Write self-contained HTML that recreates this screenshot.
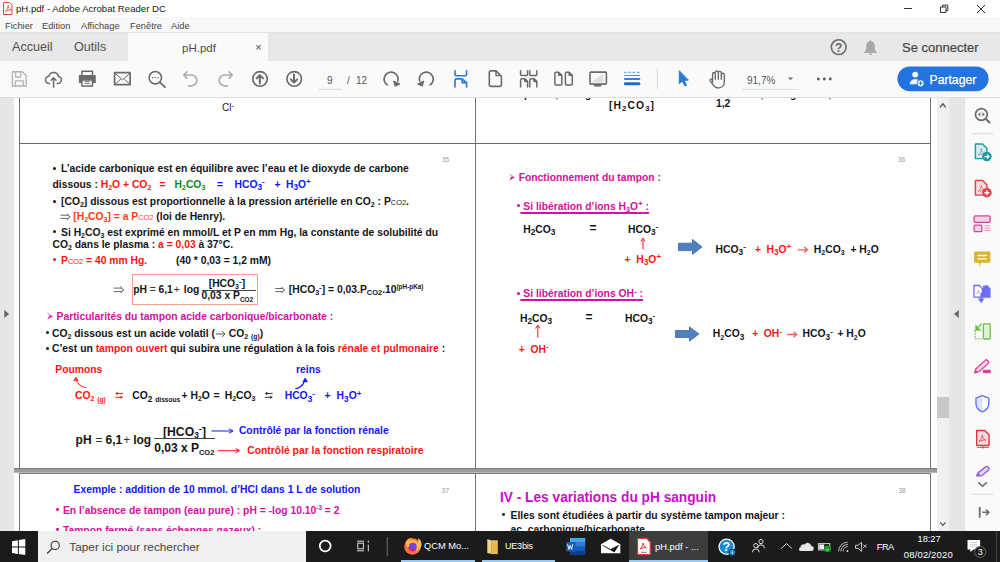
<!DOCTYPE html>
<html><head><meta charset="utf-8">
<style>
*{margin:0;padding:0;box-sizing:border-box}
html,body{width:1000px;height:562px;overflow:hidden;background:#fff;font-family:"Liberation Sans",sans-serif}
.a{position:absolute;white-space:nowrap}
#title{left:0;top:0;width:1000px;height:17px;background:#fff}
#menu{left:0;top:17px;width:1000px;height:16px;background:#f8f8f8;border-bottom:1px solid #e3e3e3}
#tabs{left:0;top:33px;width:1000px;height:28px;background:#e8e8e8}
#tb{left:0;top:61px;width:1000px;height:37px;background:#fafafa;border-bottom:1px solid #dcdcdc}
#doc{left:0;top:98px;width:963.6px;height:433px;background:#e6e6e6;overflow:hidden}
#side{left:963.6px;top:98px;width:36.4px;height:433px;background:#fafafa;border-left:1px solid #e2e2e2}
#task{left:0;top:531px;width:1000px;height:31px;background:#1b1b1b}
.t1{font-size:9.6px;color:#1a1a1a}
.m{font-size:9.3px;color:#444}

</style></head><body>
<div id="title" class="a">
  <svg class="a" style="left:0;top:0" width="20" height="17" viewBox="0 0 20 17">
    <path d="M3.5 2.5h6l2.5 2.5v9.5h-8.5z" fill="#fff" stroke="#e8423c" stroke-width="1"/>
    <path d="M5.2 11.5c1.5-1.2 2.6-3.5 2.9-6 .2 2.2 1.5 4 3.3 4.5-2-.2-4.3.4-6.2 1.5z" fill="none" stroke="#e8423c" stroke-width="0.8"/>
  </svg>
  <div class="a t1" style="left:16px;top:3.4px">pH.pdf - Adobe Acrobat Reader DC</div>
  <svg class="a" style="left:890px;top:0" width="110" height="17" viewBox="890 0 110 17">
    <path d="M904 8.5h8" stroke="#333" stroke-width="1"/>
    <path d="M940.5 7h5.5v5.5h-5.5z M942.5 7v-1.8h5.3v5.3h-1.8" fill="none" stroke="#333" stroke-width="1"/>
    <path d="M977 5l8 8M985 5l-8 8" stroke="#333" stroke-width="1"/>
  </svg>
</div>
<div id="menu" class="a">
  <div class="a m" style="left:5px;top:3.8px">Fichier</div>
  <div class="a m" style="left:42px;top:3.8px">Edition</div>
  <div class="a m" style="left:81px;top:3.8px">Affichage</div>
  <div class="a m" style="left:130px;top:3.8px">Fenêtre</div>
  <div class="a m" style="left:171px;top:3.8px">Aide</div>
</div>
<div id="tabs" class="a">
  <div class="a" style="left:12px;top:6.6px;font-size:12.6px;color:#505050">Accueil</div>
  <div class="a" style="left:74px;top:6.6px;font-size:12.6px;color:#505050">Outils</div>
  <div class="a" style="left:128px;top:0;width:140px;height:28px;background:#fafafa"></div>
  <div class="a" style="left:182px;top:8.5px;font-size:11.5px;color:#4a4a4a">pH.pdf</div>
  <div class="a" style="left:255.3px;top:8px;font-size:11px;color:#444">×</div>
  <svg class="a" style="left:820px;top:0" width="70" height="28" viewBox="820 33 70 28">
    <circle cx="838.7" cy="47.1" r="7.4" fill="none" stroke="#6a6a6a" stroke-width="1.6"/>
    <text x="838.7" y="51.6" font-size="12" font-weight="bold" text-anchor="middle" fill="#6a6a6a" font-family="Liberation Sans">?</text>
    <path d="M870.5 40.2c-.7 0-1 .5-1 1-2.3.6-3.3 2.5-3.3 5v3.5l-2 2.6v.8h12.6v-.8l-2-2.6v-3.5c0-2.5-1-4.4-3.3-5 0-.5-.3-1-1-1z M869 53.5h3v1.2h-3z" fill="#a8a8a8"/>
  </svg>
  <div class="a" style="left:902px;top:7px;font-size:13px;color:#444;-webkit-text-stroke:0.2px #444">Se connecter</div>
</div>
<div id="tb" class="a">
  <svg class="a" style="left:0;top:0" width="1000" height="36" viewBox="0 61 1000 36">
    <g fill="none" stroke-linecap="round" stroke-linejoin="round">
      <!-- save -->
      <path d="M12.4 71.8h9.8l4 4v10.2h-13.8z" stroke="#b4b4b4" stroke-width="1.4"/>
      <path d="M15.6 72v5h5v-5" stroke="#b4b4b4" stroke-width="1.3"/>
      <path d="M15.4 86v-5.2h7.8v5.2" stroke="#b4b4b4" stroke-width="1.3"/>
      <!-- upload cloud -->
      <path d="M49.4 83.5a3.6 3.6 0 0 1 -.6-7.2 5 5 0 0 1 9.7 .2 3.5 3.5 0 0 1 -1.3 7" stroke="#6a6a6a" stroke-width="1.5"/>
      <path d="M53.6 87.2v-9.2M51.2 80.2l2.4-2.4 2.4 2.4" stroke="#6a6a6a" stroke-width="1.5"/>
      <!-- print -->
      <path d="M81.9 75.6v-4.3h10.6v4.3" stroke="#6a6a6a" stroke-width="1.5"/>
      <path d="M79.5 75.6h15.6v6.8h-15.6z" fill="#6a6a6a" stroke="#6a6a6a" stroke-width="1.3"/>
      <path d="M81.9 79.9h10.6v6.2h-10.6z" fill="#fafafa" stroke="#6a6a6a" stroke-width="1.5"/>
      <path d="M85 81.6h4.3M85 83.4h4.3" stroke="#6a6a6a" stroke-width="0.9"/>
      <!-- mail -->
      <path d="M114.6 72.6h15.5v12h-15.5z" stroke="#6a6a6a" stroke-width="1.7"/>
      <path d="M115 73.2l7.5 6.6 7.5-6.6M115 84.2l5.5-4.8M130 84.2l-5.5-4.8" stroke="#6a6a6a" stroke-width="1"/>
      <!-- search -->
      <circle cx="155.3" cy="77.7" r="6.2" stroke="#6a6a6a" stroke-width="1.6"/>
      <path d="M160 82.3l5 4.8" stroke="#6a6a6a" stroke-width="1.8"/>
      <path d="M152.5 77.7h.3M155.2 77.7h.3M158 77.7h.3" stroke="#6a6a6a" stroke-width="1.3"/>
      <!-- undo -->
      <path d="M184.5 75h7a5.4 5.4 0 0 1 0 10.8h-2.8M186.8 72l-3 3 3 3.2" stroke="#adadad" stroke-width="1.7"/>
      <!-- redo -->
      <path d="M231.5 75h-7a5.4 5.4 0 0 0 0 10.8h2.8M229.2 72l3 3-3 3.2" stroke="#adadad" stroke-width="1.7"/>
      <!-- up / down -->
      <circle cx="260" cy="78.9" r="7.3" stroke="#6a6a6a" stroke-width="1.6"/>
      <path d="M259.8 83.4v-8.2M256.6 78.4l3.2-3.2 3.2 3.2" stroke="#6a6a6a" stroke-width="2"/>
      <circle cx="294.2" cy="78.9" r="7.3" stroke="#6a6a6a" stroke-width="1.6"/>
      <path d="M294 74.4v8.2M290.8 79.4l3.2 3.2 3.2-3.2" stroke="#6a6a6a" stroke-width="2"/>
      <!-- rotate cw -->
      <path d="M387.8 85.3a7 7 0 1 1 9.8-3.5" stroke="#6a6a6a" stroke-width="1.7" stroke-linecap="butt"/>
      <path d="M393.9 81.2l6 2.8-4.5 2.1z" fill="#6a6a6a" stroke="#6a6a6a" stroke-width="1"/>
      <!-- rotate ccw -->
      <path d="M429.6 85.3a7 7 0 1 0 -9.8-3.5" stroke="#6a6a6a" stroke-width="1.7" stroke-linecap="butt"/>
      <path d="M423.5 81.2l-6 2.8 4.5 2.1z" fill="#6a6a6a" stroke="#6a6a6a" stroke-width="1"/>
      <!-- scroll blue -->
      <path d="M455 70.8v3.6a1.3 1.3 0 0 0 1.3 1.3h9a1.3 1.3 0 0 0 1.3-1.3v-3.6" stroke="#2b78d4" stroke-width="1.6"/>
      <path d="M455 87v-6.8a1.3 1.3 0 0 1 1.3-1.3h5.8l4.5 3.6v4.5M462.1 79v3.6h4.4" stroke="#2b78d4" stroke-width="1.6"/>
      <!-- page -->
      <path d="M489.3 72.2a1.3 1.3 0 0 1 1.3-1.3h5.4l5.4 5.4v8.8a1.3 1.3 0 0 1 -1.3 1.3h-9.5a1.3 1.3 0 0 1 -1.3-1.3z" stroke="#6a6a6a" stroke-width="1.6"/>
      <path d="M496 71v4.6h5" stroke="#6a6a6a" stroke-width="1.4"/>
      <!-- grid -->
      <path d="M520.6 70.8v3.6a1.2 1.2 0 0 0 1.2 1.2h4.6a1.2 1.2 0 0 0 1.2-1.2v-3.6M529.8 70.8v3.6a1.2 1.2 0 0 0 1.2 1.2h4.6a1.2 1.2 0 0 0 1.2-1.2v-3.6" stroke="#6a6a6a" stroke-width="1.5"/>
      <path d="M520.6 87v-7a1.2 1.2 0 0 1 1.2-1.2h3.2l2.6 2.6v5.6M524.8 79v2.6h2.8M529.8 87v-7a1.2 1.2 0 0 1 1.2-1.2h3.2l2.6 2.6v5.6M534 79v2.6h2.8" stroke="#6a6a6a" stroke-width="1.5"/>
      <!-- two pages -->
      <path d="M554.9 73.2a1 1 0 0 1 1-1h2.8l3.1 3.1v8.6a1 1 0 0 1 -1 1h-4.9a1 1 0 0 1 -1-1z M558.7 72.3v3h3M565.4 73.2a1 1 0 0 1 1-1h2.8l3.1 3.1v8.6a1 1 0 0 1 -1 1h-4.9a1 1 0 0 1 -1-1z M569.2 72.3v3h3" stroke="#6a6a6a" stroke-width="1.5"/>
      <!-- screen -->
      <path d="M603.5 73.4v9.2h-12.6z" fill="#dedede" stroke="none"/>
      <path d="M590 73a.9.9 0 0 1 .9-.9h14.6a.9.9 0 0 1 .9.9v10.2a.9.9 0 0 1 -.9.9h-14.6a.9.9 0 0 1 -.9-.9z" stroke="#6a6a6a" stroke-width="1.6"/>
      <path d="M594.2 85.5h7" stroke="#6a6a6a" stroke-width="2.2" stroke-linecap="butt"/>
      <!-- lines -->
      <path d="M624.5 72.3h1.6M628.8 72.3h1.6M633 72.3h1.6M637.3 72.3h1.8" stroke="#4a8ddc" stroke-width="1"/>
      <path d="M624.5 75.5h15" stroke="#4a8ddc" stroke-width="1"/>
      <path d="M624.8 79h14.6" stroke="#3681d8" stroke-width="1.8"/>
      <path d="M625.3 83.8h13.6" stroke="#1c6cc8" stroke-width="3"/>
      <!-- separator -->
      <path d="M657.3 68v21" stroke="#dcdcdc" stroke-width="1" stroke-linecap="butt"/>
      <!-- pointer -->
      <path d="M679.3 71.1v12.6l3-2.7 2.7 5.1 1.5-.9-2.4-4.8 3.9-.3z" fill="#2b78d4" stroke="#2b78d4" stroke-width="1"/>
      <!-- hand -->
      <path d="M712.6 82.2V73.8a1.35 1.35 0 0 1 2.7 0V79.2V72.3a1.5 1.5 0 0 1 3 0V79.2V72.9a1.5 1.5 0 0 1 3 0V79.2V74.7a1.5 1.5 0 0 1 3 0V82.2c0 3.4-2.6 5.8-6 5.8-2.2 0-3.6-.9-4.8-2.6l-3.4-4.6a1.3 1.3 0 0 1 2-1.6z" stroke="#6a6a6a" stroke-width="1.35"/>
      <!-- zoom dropdown -->
      <path d="M788 77.5h5l-2.5 2.8z" fill="#6a6a6a" stroke="none"/>
      <path d="M742 89.4h57" stroke="#e0e0e0" stroke-width="1" stroke-linecap="butt"/>
      <path d="M319 89.2h23" stroke="#dadada" stroke-width="1" stroke-linecap="butt"/>
      <!-- more -->
      <circle cx="818.3" cy="79" r="1.4" fill="#555" stroke="none"/>
      <circle cx="824.3" cy="79" r="1.4" fill="#555" stroke="none"/>
      <circle cx="830.3" cy="79" r="1.4" fill="#555" stroke="none"/>
    </g>
    <!-- partager -->
    <rect x="897.4" y="66.5" width="91.2" height="24.7" rx="12.35" fill="#2374e1"/>
    <circle cx="915.2" cy="74.6" r="2.9" fill="#fff"/>
    <path d="M909.8 84.3c0-3 2.2-5 5.4-5s5.4 2 5.4 5z" fill="#fff"/>
    <circle cx="920.6" cy="83.3" r="3.6" fill="#fff" stroke="#2374e1" stroke-width="1"/>
    <path d="M918.6 83.3h4M920.6 81.3v4" stroke="#2374e1" stroke-width="1.1"/>
  </svg>
  <div class="a" style="left:327px;top:14px;font-size:10px;color:#555">9</div>
  <div class="a" style="left:347px;top:14px;font-size:10px;color:#555">/</div>
  <div class="a" style="left:356px;top:14px;font-size:10px;color:#555">12</div>
  <div class="a" style="left:747px;top:14px;font-size:10px;color:#555">91,7%</div>
  <div class="a" style="left:929.5px;top:11.6px;font-size:12.2px;color:#fff;-webkit-text-stroke:0.25px #fff">Partager</div>
</div>

<div id="doc" class="a">
<div class="a" style="left:14px;top:0;width:935px;height:434px;background:#fff"></div>
<div class="a" style="left:19px;top:0;width:1px;height:370px;background:#737373"></div>
<div class="a" style="left:19px;top:375px;width:1px;height:100px;background:#737373"></div>
<div class="a" style="left:475px;top:0;width:1px;height:370px;background:#737373"></div>
<div class="a" style="left:475px;top:375px;width:1px;height:100px;background:#737373"></div>
<div class="a" style="left:930px;top:0;width:1px;height:370px;background:#737373"></div>
<div class="a" style="left:930px;top:375px;width:1px;height:100px;background:#737373"></div>
<div class="a" style="left:19px;top:45px;width:912px;height:1px;background:#6a6a6a"></div>
<div class="a" style="left:14px;top:370px;width:923px;height:1px;background:#7a7a7a"></div>
<div class="a" style="left:14px;top:371px;width:923px;height:3px;background:#9c9c9c"></div>
<div class="a" style="left:14px;top:374px;width:923px;height:1px;background:#b8b8b8"></div>
<div class="a" style="left:19px;top:375px;width:912px;height:1px;background:#7a7a7a"></div>
<div class="a" style="left:222.0px;top:4.53px;font-size:10px;line-height:10px;color:#222;font-weight:normal;">Cl<span style="font-size:78%;position:relative;top:-3px">-</span></div>
<div class="a" style="left:609.0px;top:2.78px;font-size:10.3px;line-height:10.3px;color:#141418;font-weight:bold;letter-spacing:1.1px">[H<span style="font-size:75%;position:relative;top:2px">2</span>CO<span style="font-size:75%;position:relative;top:2px">3</span>]</div>
<div class="a" style="left:716.0px;top:0.78px;font-size:10.3px;line-height:10.3px;color:#141418;font-weight:bold;">1,2</div>
<div class="a" style="left:524.0px;top:-7.82px;font-size:10.3px;line-height:10.3px;color:#141418;font-weight:bold;">pH = 6,1 + log</div>
<div class="a" style="left:746.0px;top:-7.82px;font-size:10.3px;line-height:10.3px;color:#141418;font-weight:bold;">= 6,1 + log 20 = 7,4</div>
<div class="a" style="left:442.0px;top:59.00px;font-size:6.5px;line-height:6.5px;color:#999;font-weight:normal;">35</div>
<div class="a" style="left:52.6px;top:68.6px;width:3px;height:3px;border-radius:50%;background:#141418"></div>
<div class="a" style="left:61.0px;top:66.26px;font-size:10.33px;line-height:10.33px;color:#141418;font-weight:bold;">L’acide carbonique est en équilibre avec l’eau et le dioxyde de carbone</div>
<div class="a" style="left:52.5px;top:81.66px;font-size:10.33px;line-height:10.33px;color:#141418;font-weight:bold;">dissous : <span style="color:#ff1414">H<span style="font-size:68%;position:relative;top:2.2px">2</span>O + CO<span style="font-size:68%;position:relative;top:2.2px">2</span></span></div>
<div class="a" style="left:159.6px;top:81.66px;font-size:10.33px;line-height:10.33px;color:#ff1414;font-weight:bold;">=</div>
<div class="a" style="left:174.5px;top:81.66px;font-size:10.33px;line-height:10.33px;color:#0f8a0f;font-weight:bold;">H<span style="font-size:68%;position:relative;top:2.2px">2</span>CO<span style="font-size:68%;position:relative;top:2.2px">3</span></div>
<div class="a" style="left:217.0px;top:81.66px;font-size:10.33px;line-height:10.33px;color:#1414ff;font-weight:bold;">=</div>
<div class="a" style="left:234.5px;top:81.66px;font-size:10.33px;line-height:10.33px;color:#1414ff;font-weight:bold;">HCO<span style="font-size:80%;position:relative;top:2.6px">3</span><span style="font-size:78%;position:relative;top:-3.4px">-</span></div>
<div class="a" style="left:274.5px;top:81.66px;font-size:10.33px;line-height:10.33px;color:#1414ff;font-weight:bold;">+</div>
<div class="a" style="left:286.0px;top:81.66px;font-size:10.33px;line-height:10.33px;color:#1414ff;font-weight:bold;">H<span style="font-size:80%;position:relative;top:2.6px">3</span>O<span style="font-size:78%;position:relative;top:-3.4px">+</span></div>
<div class="a" style="left:52.6px;top:101.6px;width:3px;height:3px;border-radius:50%;background:#141418"></div>
<div class="a" style="left:61.0px;top:98.86px;font-size:10.33px;line-height:10.33px;color:#141418;font-weight:bold;">[CO<span style="font-size:68%;position:relative;top:2.2px">2</span>] dissous est proportionnelle à la pression artérielle en CO<span style="font-size:68%;position:relative;top:2.2px">2</span> : P<span style="font-weight:normal;font-size:72%">CO2</span>.</div>
<div class="a" style="left:73.3px;top:113.56px;font-size:10.33px;line-height:10.33px;color:#141418;font-weight:bold;"><span style="color:#ff3a1a">[H<span style="font-size:68%;position:relative;top:2.2px">2</span>CO<span style="font-size:68%;position:relative;top:2.2px">3</span>] = a P<span style="font-weight:normal;font-size:72%">CO2</span></span> (loi de Henry).</div>
<div class="a" style="left:52.6px;top:132.0px;width:3px;height:3px;border-radius:50%;background:#141418"></div>
<div class="a" style="left:61.0px;top:129.66px;font-size:10.33px;line-height:10.33px;color:#141418;font-weight:bold;">Si H<span style="font-size:68%;position:relative;top:2.2px">2</span>CO<span style="font-size:68%;position:relative;top:2.2px">3</span> est exprimé en mmol/L et P en mm Hg, la constante de solubilité du</div>
<div class="a" style="left:52.5px;top:141.76px;font-size:10.33px;line-height:10.33px;color:#141418;font-weight:bold;">CO<span style="font-size:68%;position:relative;top:2.2px">2</span> dans le plasma : <span style="color:#ff1414">a = 0,03</span> à 37°C.</div>
<div class="a" style="left:52.6px;top:160.4px;width:3px;height:3px;border-radius:50%;background:#ff1414"></div>
<div class="a" style="left:61.0px;top:157.96px;font-size:10.33px;line-height:10.33px;color:#ff1414;font-weight:bold;">P<span style="font-weight:normal;font-size:72%">CO2</span> = 40 mm Hg.</div>
<div class="a" style="left:176.0px;top:157.96px;font-size:10.33px;line-height:10.33px;color:#141418;font-weight:bold;">(40 * 0,03 = 1,2 mM)</div>
<div class="a" style="left:131.5px;top:175.5px;width:126px;height:31.5px;border:1px solid #f4a090"></div>
<div class="a" style="left:133.2px;top:186.76px;font-size:10.33px;line-height:10.33px;color:#141418;font-weight:bold;">pH</div>
<div class="a" style="left:149.8px;top:186.76px;font-size:10.33px;line-height:10.33px;color:#333;font-weight:normal;">=</div>
<div class="a" style="left:158.5px;top:186.76px;font-size:10.33px;line-height:10.33px;color:#141418;font-weight:bold;">6,1</div>
<div class="a" style="left:173.8px;top:186.76px;font-size:10.33px;line-height:10.33px;color:#333;font-weight:normal;">+</div>
<div class="a" style="left:183.8px;top:186.76px;font-size:10.33px;line-height:10.33px;color:#141418;font-weight:bold;">log</div>
<div class="a" style="left:208.7px;top:181.06px;font-size:10.33px;line-height:10.33px;color:#141418;font-weight:bold;">[HCO<span style="font-size:68%;position:relative;top:2px">3</span><span style="font-size:78%;position:relative;top:-3px">-</span>]</div>
<div class="a" style="left:201.5px;top:191.60000000000002px;width:54px;height:1px;background:#444"></div>
<div class="a" style="left:201.5px;top:193.46px;font-size:10.33px;line-height:10.33px;color:#141418;font-weight:bold;">0,03 x P<span style="font-size:62%;position:relative;top:2.5px">CO2</span></div>
<div class="a" style="left:288.8px;top:187.26px;font-size:10.33px;line-height:10.33px;color:#141418;font-weight:bold;">[HCO<span style="font-size:68%;position:relative;top:2.2px">3</span><span style="font-size:78%;position:relative;top:-3.4px">-</span>] = 0,03.P<span style="font-size:72%;position:relative;top:1.5px">CO2</span>.10<span style="font-size:62%;position:relative;top:-4px">(pH-pKa)</span></div>
<svg class="a" style="left:45.8px;top:214.0px" width="9" height="8" viewBox="45.8 312 9 8"><path d="M46.8 312.6L53.0 316L49.0 316z" fill="#d4109c" opacity=".45"/><path d="M47.0 319.4L53.0 316L49.0 316z" fill="#d4109c"/></svg>
<div class="a" style="left:56.5px;top:214.06px;font-size:10.33px;line-height:10.33px;color:#d4109c;font-weight:bold;">Particularités du tampon acide carbonique/bicarbonate :</div>
<div class="a" style="left:45.9px;top:233.4px;width:3.1px;height:3.1px;border-radius:50%;background:#141418"></div>
<div class="a" style="left:52.0px;top:230.56px;font-size:10.33px;line-height:10.33px;color:#141418;font-weight:bold;">CO<span style="font-size:68%;position:relative;top:2.2px">2</span> dissous est un acide volatil (</div>
<div class="a" style="left:228.8px;top:230.56px;font-size:10.33px;line-height:10.33px;color:#141418;font-weight:bold;">CO<span style="font-size:68%;position:relative;top:2.2px">2</span> <span style="font-size:65%;position:relative;top:2.5px">(g)</span>)</div>
<div class="a" style="left:45.9px;top:248.7px;width:3.1px;height:3.1px;border-radius:50%;background:#141418"></div>
<div class="a" style="left:52.0px;top:245.96px;font-size:10.33px;line-height:10.33px;color:#141418;font-weight:bold;">C’est un <span style="color:#ff1414">tampon ouvert</span> qui subira une régulation à la fois <span style="color:#ff1414">rénale et pulmonaire</span> :</div>
<div class="a" style="left:55.3px;top:266.86px;font-size:10.33px;line-height:10.33px;color:#ff1414;font-weight:bold;">Poumons</div>
<div class="a" style="left:296.0px;top:267.26px;font-size:10.33px;line-height:10.33px;color:#1414ff;font-weight:bold;">reins</div>
<div class="a" style="left:75.0px;top:293.26px;font-size:10.33px;line-height:10.33px;color:#ff1414;font-weight:bold;">CO<span style="font-size:68%;position:relative;top:2.2px">2</span> <span style="font-size:65%;position:relative;top:2.5px">(g)</span></div>
<div class="a" style="left:132.3px;top:293.26px;font-size:10.33px;line-height:10.33px;color:#141418;font-weight:bold;">CO<span style="font-size:80%;position:relative;top:2.5px">2</span> <span style="font-size:64%;position:relative;top:2.8px">dissous</span></div>
<div class="a" style="left:181.5px;top:293.26px;font-size:10.33px;line-height:10.33px;color:#141418;font-weight:bold;">+ H<span style="font-size:68%;position:relative;top:2.2px">2</span>O</div>
<div class="a" style="left:213.5px;top:293.26px;font-size:10.33px;line-height:10.33px;color:#141418;font-weight:bold;">=</div>
<div class="a" style="left:224.7px;top:293.26px;font-size:10.33px;line-height:10.33px;color:#141418;font-weight:bold;">H<span style="font-size:68%;position:relative;top:2.2px">2</span>CO<span style="font-size:68%;position:relative;top:2.2px">3</span></div>
<div class="a" style="left:284.7px;top:293.26px;font-size:10.33px;line-height:10.33px;color:#1414ff;font-weight:bold;">HCO<span style="font-size:80%;position:relative;top:2.6px">3</span><span style="font-size:78%;position:relative;top:-3.4px">-</span></div>
<div class="a" style="left:324.6px;top:293.26px;font-size:10.33px;line-height:10.33px;color:#1414ff;font-weight:bold;">+</div>
<div class="a" style="left:336.6px;top:293.26px;font-size:10.33px;line-height:10.33px;color:#1414ff;font-weight:bold;">H<span style="font-size:80%;position:relative;top:2.6px">3</span>O<span style="font-size:78%;position:relative;top:-3.4px">+</span></div>
<svg class="a" style="left:0;top:0" width="963" height="434" viewBox="0 98 963 434">
<path d="M86.2 387.8Q77.6 386.4 75.9 378" fill="none" stroke="#ff3030" stroke-width="1.15"/>
<path d="M73.6 381l2.2-4 2.6 3.4z" fill="#ff3030" stroke="#ff3030" stroke-width="0.6" stroke-linejoin="round"/>
<path d="M295.3 388.8Q302.8 387.6 305 379.5" fill="none" stroke="#1414ff" stroke-width="1.15"/>
<path d="M302.8 381.8l2.4-3.9 2.3 4z" fill="#1414ff" stroke="#1414ff" stroke-width="0.6" stroke-linejoin="round"/>
<path d="M211.5 431h21" stroke="#1414ff" stroke-width="1"/>
<path d="M229 428.8l4 2.2-4 2.2" fill="none" stroke="#1414ff" stroke-width="1"/>
<path d="M218 450.7h21" stroke="#ff1414" stroke-width="1"/>
<path d="M235.5 448.5l4 2.2-4 2.2" fill="none" stroke="#ff1414" stroke-width="1"/>
</svg>
<div class="a" style="left:75.6px;top:335.84px;font-size:12px;line-height:12px;color:#141418;font-weight:bold;">pH</div>
<div class="a" style="left:95.6px;top:335.84px;font-size:12px;line-height:12px;color:#333;font-weight:normal;">=</div>
<div class="a" style="left:105.6px;top:335.84px;font-size:12px;line-height:12px;color:#141418;font-weight:bold;">6,1</div>
<div class="a" style="left:123.2px;top:335.84px;font-size:12px;line-height:12px;color:#333;font-weight:normal;">+</div>
<div class="a" style="left:133.2px;top:335.84px;font-size:12px;line-height:12px;color:#141418;font-weight:bold;">log</div>
<div class="a" style="left:163.0px;top:327.67px;font-size:12.2px;line-height:12.2px;color:#141418;font-weight:bold;">[HCO<span style="font-size:68%;position:relative;top:2.5px">3</span><span style="font-size:78%;position:relative;top:-4px">-</span>]</div>
<div class="a" style="left:154.3px;top:340px;width:60.5px;height:1.2px;background:#444"></div>
<div class="a" style="left:154.3px;top:343.54px;font-size:12px;line-height:12px;color:#141418;font-weight:bold;">0,03 x P<span style="font-size:62%;position:relative;top:3px">CO2</span></div>
<div class="a" style="left:238.9px;top:328.26px;font-size:10.33px;line-height:10.33px;color:#1414ff;font-weight:bold;">Contrôlé par la fonction rénale</div>
<div class="a" style="left:247.3px;top:347.66px;font-size:10.33px;line-height:10.33px;color:#ff1414;font-weight:bold;">Contrôlé par la fonction respiratoire</div>
<div class="a" style="left:898.0px;top:59.00px;font-size:6.5px;line-height:6.5px;color:#999;font-weight:normal;">36</div>
<svg class="a" style="left:507.8px;top:75.4px" width="9" height="8" viewBox="507.8 173.4 9 8"><path d="M508.8 174.0L515.0 177.4L511.0 177.4z" fill="#d4109c" opacity=".45"/><path d="M509.0 180.8L515.0 177.4L511.0 177.4z" fill="#d4109c"/></svg>
<div class="a" style="left:518.7px;top:74.96px;font-size:10.33px;line-height:10.33px;color:#d4109c;font-weight:bold;">Fonctionnement du tampon :</div>
<div class="a" style="left:516.9px;top:106.2px;width:3px;height:3px;border-radius:50%;background:#d4109c"></div>
<div class="a" style="left:520.4px;top:103.66px;font-size:10.33px;line-height:10.33px;color:#d4109c;font-weight:bold;"><u style="text-decoration-thickness:1.5px;text-underline-offset:1.7px">&nbsp;Si libération d’ions H<span style="font-size:68%;position:relative;top:2.2px">3</span>O<span style="font-size:78%;position:relative;top:-3.4px">+</span> :</u></div>
<div class="a" style="left:523.3px;top:126.66px;font-size:10.33px;line-height:10.33px;color:#141418;font-weight:bold;">H<span style="font-size:80%;position:relative;top:2.5px">2</span>CO<span style="font-size:80%;position:relative;top:2.5px">3</span></div>
<div class="a" style="left:589.5px;top:124.34px;font-size:12px;line-height:12px;color:#141418;font-weight:bold;">=</div>
<div class="a" style="left:628.0px;top:126.66px;font-size:10.33px;line-height:10.33px;color:#141418;font-weight:bold;">HCO<span style="font-size:80%;position:relative;top:2.5px">3</span><span style="font-size:78%;position:relative;top:-3.4px">-</span></div>
<div class="a" style="left:624.5px;top:156.56px;font-size:10.33px;line-height:10.33px;color:#ff1414;font-weight:bold;">+ &nbsp;H<span style="font-size:80%;position:relative;top:2.5px">3</span>O<span style="font-size:78%;position:relative;top:-3.4px">+</span></div>
<div class="a" style="left:715.6px;top:146.76px;font-size:10.33px;line-height:10.33px;color:#141418;font-weight:bold;">HCO<span style="font-size:80%;position:relative;top:2.5px">3</span><span style="font-size:78%;position:relative;top:-3.4px">-</span></div>
<div class="a" style="left:755.0px;top:146.76px;font-size:10.33px;line-height:10.33px;color:#ff1414;font-weight:bold;">+</div>
<div class="a" style="left:766.5px;top:146.76px;font-size:10.33px;line-height:10.33px;color:#ff1414;font-weight:bold;">H<span style="font-size:80%;position:relative;top:2.5px">3</span>O<span style="font-size:78%;position:relative;top:-3.4px">+</span></div>
<div class="a" style="left:813.8px;top:146.76px;font-size:10.33px;line-height:10.33px;color:#141418;font-weight:bold;">H<span style="font-size:68%;position:relative;top:2.2px">2</span>CO<span style="font-size:68%;position:relative;top:2.2px">3</span></div>
<div class="a" style="left:850.4px;top:146.76px;font-size:10.33px;line-height:10.33px;color:#141418;font-weight:bold;">+ H<span style="font-size:68%;position:relative;top:2.2px">2</span>O</div>
<div class="a" style="left:516.9px;top:194.0px;width:3px;height:3px;border-radius:50%;background:#d4109c"></div>
<div class="a" style="left:520.4px;top:191.46px;font-size:10.33px;line-height:10.33px;color:#d4109c;font-weight:bold;"><u style="text-decoration-thickness:1.5px;text-underline-offset:1.7px">&nbsp;Si libération d’ions OH<span style="font-size:78%;position:relative;top:-3.4px">-</span> :</u></div>
<div class="a" style="left:520.0px;top:215.66px;font-size:10.33px;line-height:10.33px;color:#141418;font-weight:bold;">H<span style="font-size:80%;position:relative;top:2.5px">2</span>CO<span style="font-size:80%;position:relative;top:2.5px">3</span></div>
<div class="a" style="left:585.5px;top:213.34px;font-size:12px;line-height:12px;color:#141418;font-weight:bold;">=</div>
<div class="a" style="left:625.0px;top:215.66px;font-size:10.33px;line-height:10.33px;color:#141418;font-weight:bold;">HCO<span style="font-size:80%;position:relative;top:2.5px">3</span><span style="font-size:78%;position:relative;top:-3.4px">-</span></div>
<div class="a" style="left:518.7px;top:246.66px;font-size:10.33px;line-height:10.33px;color:#ff1414;font-weight:bold;">+ &nbsp;OH<span style="font-size:78%;position:relative;top:-3.4px">-</span></div>
<div class="a" style="left:712.8px;top:231.46px;font-size:10.33px;line-height:10.33px;color:#141418;font-weight:bold;">H<span style="font-size:68%;position:relative;top:2.2px">2</span>CO<span style="font-size:80%;position:relative;top:2.5px">3</span></div>
<div class="a" style="left:752.2px;top:231.46px;font-size:10.33px;line-height:10.33px;color:#ff1414;font-weight:bold;">+</div>
<div class="a" style="left:763.7px;top:231.46px;font-size:10.33px;line-height:10.33px;color:#ff1414;font-weight:bold;">OH<span style="font-size:78%;position:relative;top:-3.4px">-</span></div>
<div class="a" style="left:802.6px;top:231.46px;font-size:10.33px;line-height:10.33px;color:#141418;font-weight:bold;">HCO<span style="font-size:80%;position:relative;top:2.5px">3</span><span style="font-size:78%;position:relative;top:-3.4px">-</span></div>
<div class="a" style="left:837.4px;top:231.46px;font-size:10.33px;line-height:10.33px;color:#141418;font-weight:bold;">+ H<span style="font-size:68%;position:relative;top:2.2px">2</span>O</div>
<svg class="a" style="left:0;top:0" width="963" height="434" viewBox="0 98 963 434">
<path d="M643 249.5v-10" stroke="#ff1414" stroke-width="1"/>
<path d="M640.8 241.5l2.2-3.5 2.2 3.5" fill="none" stroke="#ff1414" stroke-width="1"/>
<path d="M537.8 337.5v-11" stroke="#ff1414" stroke-width="1"/>
<path d="M535.6 328.5l2.2-3.5 2.2 3.5" fill="none" stroke="#ff1414" stroke-width="1"/>
<path d="M678.5 243.2h14v-3.8l9.5 7.5-9.5 7.5v-3.8h-14z" fill="#4f81bd" stroke="#3a679c" stroke-width="0.8"/>
<path d="M675.5 330.5h14v-3.6l9.5 7.1-9.5 7.1v-3.6h-14z" fill="#4f81bd" stroke="#3a679c" stroke-width="0.8"/>
</svg>
<div class="a" style="left:441.8px;top:389.50px;font-size:6.5px;line-height:6.5px;color:#999;font-weight:normal;">37</div>
<div class="a" style="left:73.6px;top:386.96px;font-size:10.33px;line-height:10.33px;color:#1414ff;font-weight:bold;">Exemple : addition de 10 mmol. d’HCl dans 1 L de solution</div>
<div class="a" style="left:55.9px;top:410.2px;width:2.9px;height:2.9px;border-radius:50%;background:#d4109c"></div>
<div class="a" style="left:62.9px;top:407.76px;font-size:10.33px;line-height:10.33px;color:#d4109c;font-weight:bold;">En l’absence de tampon (eau pure) : pH = -log 10.10<span style="font-size:62%;position:relative;top:-3.5px">-3</span> = 2</div>
<div class="a" style="left:55.9px;top:430.2px;width:2.9px;height:2.9px;border-radius:50%;background:#d4109c"></div>
<div class="a" style="left:62.9px;top:427.86px;font-size:10.33px;line-height:10.33px;color:#d4109c;font-weight:bold;">Tampon fermé (sans échanges gazeux) :</div>
<div class="a" style="left:898.5px;top:389.50px;font-size:6.5px;line-height:6.5px;color:#999;font-weight:normal;">38</div>
<div class="a" style="left:500.3px;top:391.80px;font-size:14.3px;line-height:14.3px;color:#cc0acc;font-weight:bold;transform:scaleX(0.958);transform-origin:0 0">IV - Les variations du pH sanguin</div>
<div class="a" style="left:502.4px;top:415.4px;width:2.8px;height:2.8px;border-radius:50%;background:#141418"></div>
<div class="a" style="left:510.6px;top:412.66px;font-size:10.33px;line-height:10.33px;color:#141418;font-weight:bold;">Elles sont étudiées à partir du système tampon majeur :</div>
<div class="a" style="left:510.6px;top:426.76px;font-size:10.33px;line-height:10.33px;color:#141418;font-weight:bold;">ac. carbonique/bicarbonate</div>
<div class="a" style="left:936.6px;top:0;width:12.6px;height:434px;background:#f0f0f0"></div>
<div class="a" style="left:949.2px;top:0;width:14.4px;height:434px;background:#e6e6e6"></div>
<div class="a" style="left:936.6px;top:298.8px;width:12.6px;height:21.7px;background:#c8c8c8"></div>
<svg class="a" style="left:0;top:0" width="963" height="434" viewBox="0 98 963 434">
<path d="M940.1 107.3l2.8-3.5 2.8 3.5" fill="none" stroke="#555" stroke-width="1.4"/>
<path d="M940.3 522.4l2.6 3 2.6-3" fill="none" stroke="#555" stroke-width="1.2"/>
<path d="M958.8 309.9v8l-4.8-4z" fill="#666"/>
<path d="M4.3 309.9v8l4.8-4z" fill="#666"/>
</svg>
<svg class="a" style="left:0;top:0" width="963" height="434" viewBox="0 98 963 434">
<path d="M60.5 215.2h7.599999999999997M60.5 218.4h7.599999999999997M67.1 213.6q1.6 3.2000000000000086 3.2 3.2000000000000086q-1.6 0 -3.2 3.2000000000000086" fill="none" stroke="#555" stroke-width="0.9"/>
<path d="M113.8 288.1h8.000000000000004M113.8 291.6h8.000000000000004M120.8 286.5q1.6 3.35 3.2 3.35q-1.6 0 -3.2 3.35" fill="none" stroke="#555" stroke-width="0.9"/>
<path d="M275.3 288.5h7.4999999999999885M275.3 291.6h7.4999999999999885M281.8 286.9q1.6 3.1500000000000115 3.2 3.1500000000000115q-1.6 0 -3.2 3.1500000000000115" fill="none" stroke="#555" stroke-width="0.9"/>
<path d="M215.8 334H224.4M222.2 331.1L225 334L222.2 336.9" fill="none" stroke="#555" stroke-width="1.0"/>
<path d="M797.8 249.8H806.9M804.2 247.10000000000002L807.5 249.8L804.2 252.5" fill="none" stroke="#ff5a5a" stroke-width="1.3"/>
<path d="M787.2 334.5H796.1999999999999M793.5 331.8L796.8 334.5L793.5 337.2" fill="none" stroke="#ff5a5a" stroke-width="1.3"/>
<path d="M116.8 393.4H123M115.3 397.3H121.5" stroke="#ff1414" stroke-width="1"/><path d="M115.3 393.4l2.4-1.8v3.6z M123 397.3l-2.4-1.8v3.6z" fill="#ff1414"/>
<path d="M266.3 393.4H272.7M264.8 397.3H271.2" stroke="#333" stroke-width="1"/><path d="M264.8 393.4l2.4-1.8v3.6z M272.7 397.3l-2.4-1.8v3.6z" fill="#333"/>
</svg>
</div>
<div id="side" class="a">
<svg class="a" style="left:-1px;top:0" width="36.4" height="434" viewBox="963.6 98 36.4 434">
  <!-- zoom magnifier with <> -->
  <circle cx="981" cy="114.4" r="5.9" fill="none" stroke="#6a6a6a" stroke-width="1.7"/>
  <path d="M985.4 118.8l3.6 3.6" stroke="#6a6a6a" stroke-width="2" stroke-linecap="round"/>
  <path d="M979.8 112.3v4.2l-2.2-2.1z M982.2 112.3v4.2l2.2-2.1z" fill="#6a6a6a"/>
  <path d="M981 112.5v3.8" stroke="#bbb" stroke-width="0.6"/>
  <path d="M971 133.7h21.8" stroke="#e3e3e3" stroke-width="1.6"/>
  <!-- export pdf teal -->
  <path d="M975 144h7.2l4.3 4.3v10.3h-11.5z" fill="#d3ebec" stroke="#1f9aa0" stroke-width="1.4" stroke-linejoin="round"/>
  <path d="M977.6 155.2c1.8-1.2 3-3.5 3.3-6.4.3 2.6 1.6 4.4 3.5 4.9-2.2-.1-4.6.4-6.8 1.5z" fill="none" stroke="#1f9aa0" stroke-width="0.7" opacity=".8"/>
  <circle cx="986.5" cy="156.5" r="4.8" fill="#1f9aa0"/>
  <path d="M984 156.5h4M986.6 154.6l1.9 1.9-1.9 1.9" fill="none" stroke="#fff" stroke-width="1.3"/>
  <!-- create pdf red -->
  <path d="M975 180.5h7.2l4.3 4.3v10.3h-11.5z" fill="#f6d9dc" stroke="#e0414c" stroke-width="1.4" stroke-linejoin="round"/>
  <path d="M977.6 191.7c1.8-1.2 3-3.5 3.3-6.4.3 2.6 1.6 4.4 3.5 4.9-2.2-.1-4.6.4-6.8 1.5z" fill="none" stroke="#e0414c" stroke-width="0.7" opacity=".8"/>
  <circle cx="986.5" cy="192.7" r="4.8" fill="#e0414c"/>
  <path d="M984 192.7h5M986.5 190.2v5" stroke="#fff" stroke-width="1.3"/>
  <!-- organize pink -->
  <rect x="973.7" y="215.9" width="16" height="6.4" rx="1.2" fill="#f5d3e6" stroke="#d9409a" stroke-width="1.3"/>
  <rect x="973.7" y="225.1" width="7.8" height="6.5" rx="1.2" fill="#f5d3e6" stroke="#d9409a" stroke-width="1.3"/>
  <path d="M984 225.8h5.8M984 228.1h5.8M984 230.4h5.8" stroke="#e57fb9" stroke-width="0.9"/>
  <!-- comment yellow -->
  <path d="M975 251.6h13.6a1.3 1.3 0 0 1 1.3 1.3v8.6a1.3 1.3 0 0 1 -1.3 1.3h-8l-1.9 4.4v-4.4h-3.7a1.3 1.3 0 0 1 -1.3-1.3v-8.6a1.3 1.3 0 0 1 1.3-1.3z" fill="#dcb42e"/>
  <path d="M977 255.5h9.6M977 258.9h9.6" stroke="#fff" stroke-width="1.3"/>
  <!-- combine blue -->
  <path d="M973.6 285.5h5.4l3 3v8.6h-8.4z" fill="#fff" stroke="#6b6ef0" stroke-width="1.3"/>
  <path d="M982.5 285.2h4.5l3.2 3.2v9.4h-7.7z" fill="#6b6ef0"/>
  <path d="M982 288v-2.7h2.7" fill="none" stroke="#fff" stroke-width="0.6"/>
  <path d="M976.2 294c1-.8 1.6-2 1.8-3.6.2 1.4.9 2.4 1.9 2.7" fill="none" stroke="#6b6ef0" stroke-width="0.6"/>
  <path d="M980.8 293v6" stroke="#6b6ef0" stroke-width="1.6"/>
  <path d="M977.5 298.5h6.6l-3.3 4.8z" fill="#6b6ef0"/>
  <!-- compress green -->
  <rect x="983" y="323.8" width="6.8" height="15.2" rx="0.8" fill="#def2d4" stroke="#6cc04a" stroke-width="1.3"/>
  <path d="M974.7 330.3h6.5M974.7 338.9h6.5M974.7 330.3v8.6" fill="none" stroke="#6cc04a" stroke-width="1.3" stroke-dasharray="1.6 1.1"/>
  <path d="M981.2 323.8l-5.2 5.2" stroke="#6cc04a" stroke-width="1.3"/>
  <path d="M975 324.6v5.4h5.4z" fill="#6cc04a"/>
  <!-- fill sign pink -->
  <path d="M974.2 372.8l1.2-3.8 9.4-8.6a1.7 1.7 0 0 1 2.4 0l.6.6a1.7 1.7 0 0 1 0 2.4l-9.4 8.6z" fill="#f5d3e6" stroke="#d9409a" stroke-width="1.3" stroke-linejoin="round"/>
  <path d="M974.2 372.8l3.6-.6-3-3z" fill="#d9409a"/>
  <rect x="982.5" y="369.8" width="7.8" height="3.4" fill="#d9409a"/>
  <!-- shield blue -->
  <path d="M982 395.6l6.4 2.6v5.4c0 4.2-2.9 7-6.4 8.3-3.5-1.3-6.4-4.1-6.4-8.3v-5.4z" fill="#fff" stroke="#5d6ef0" stroke-width="1.4" stroke-linejoin="round"/>
  <path d="M982 396.6l-5.4 2.2v4.8c0 3.6 2.3 6 5.4 7.2z" fill="#dde0fb"/>
  <!-- red pdf -->
  <path d="M976.3 430.5h8l4.4 4.4v9.9a.8.8 0 0 1 -.8.8h-11.6z" fill="#f8dadd" stroke="#d9363e" stroke-width="1.4" stroke-linejoin="round"/>
  <path d="M978.6 441.5c1.8-1.2 3-3.5 3.3-6.4.3 2.6 1.6 4.4 3.5 4.9-2.2-.1-4.6.4-6.8 1.5z" fill="none" stroke="#d9363e" stroke-width="0.8"/>
  <path d="M976.6 447.5h12" stroke="#d9363e" stroke-width="0.8"/>
  <circle cx="982.6" cy="447.5" r="1" fill="#d9363e"/>
  <!-- purple pen -->
  <path d="M976.2 476l1.5-3.2 7.5-6a1.6 1.6 0 0 1 2.2.2l.9 1a1.6 1.6 0 0 1 -.2 2.2l-7.5 6z" fill="#e2d4f6" stroke="#8e5ad8" stroke-width="1.3"/>
  <path d="M976.2 476l4.4-.2-2.9-3z" fill="#8e5ad8"/>
  <rect x="966" y="476.8" width="30" height="5" fill="#fafafa"/>
  <!-- chevron -->
  <path d="M978 482.4l4.2 3.9 4.2-3.9" fill="none" stroke="#6a6a6a" stroke-width="1.6"/>
  <path d="M970.8 494.4h22.2" stroke="#e3e3e3" stroke-width="1.2"/>
  <!-- |-> -->
  <path d="M979.3 507v10.8" stroke="#6a6a6a" stroke-width="1.8"/>
  <path d="M982 512.4h6.5M985.6 509.5l2.9 2.9-2.9 2.9" fill="none" stroke="#6a6a6a" stroke-width="1.5"/>
</svg>

</div>
<div id="task" class="a">
<div class="a" style="left:37.5px;top:0;width:268.8px;height:31px;background:#f0f0f0"></div>
<div class="a" style="left:628.6px;top:0;width:79.2px;height:31px;background:#3d3d3d"></div>
<div class="a" style="left:401px;top:29.4px;width:73.6px;height:1.6px;background:#9cc9ef"></div>
<div class="a" style="left:481.7px;top:29.4px;width:72.9px;height:1.6px;background:#9cc9ef"></div>
<div class="a" style="left:629px;top:29.4px;width:78.8px;height:1.6px;background:#9cc9ef"></div>
<svg class="a" style="left:0;top:0" width="1000" height="31" viewBox="0 531 1000 31">
  <!-- windows logo -->
  <path d="M12 541.2l5.9-.9v6.3h-5.9z M18.9 540.1l6.4-1v7.5h-6.4z M12 547.6h5.9v6.3l-5.9-.9z M18.9 547.6h6.4v7.5l-6.4-1z" fill="#fff"/>
  <!-- search magnifier -->
  <circle cx="55.2" cy="545.4" r="4.1" fill="none" stroke="#333" stroke-width="1.1"/>
  <path d="M52.3 548.3l-5.2 5.2" stroke="#333" stroke-width="1.2"/>
  <!-- cortana -->
  <circle cx="325.2" cy="546" r="5.4" fill="none" stroke="#fff" stroke-width="1.7"/>
  <!-- task view -->
  <path d="M357 541.2h7.2M357 550.8h7.2" stroke="#ddd" stroke-width="1"/>
  <rect x="357.8" y="543.2" width="5.6" height="5.6" fill="none" stroke="#ddd" stroke-width="1"/>
  <path d="M368.3 540.6v2.2M368.3 544.6v6.8" stroke="#ddd" stroke-width="1"/>
  <!-- separator -->
  <path d="M387.3 537v19" stroke="#555" stroke-width="1.4"/>
  <!-- firefox -->
  <circle cx="412.5" cy="546.5" r="8.3" fill="#ff7139"/>
  <path d="M406 541.5a8.3 8.3 0 0 0 14.8 6 8.3 8.3 0 0 0 -3-9.8c1 2.2.4 4-.6 4.6a5 5 0 0 0 -5.2-2.3c-2.5.3-3.5 2-3.5 2s1-3.2 4-3.8c-2.8-.6-5.3 1.3-6.5 3.3z" fill="#ffbd4f"/>
  <circle cx="412.8" cy="546.8" r="4" fill="#7542e5"/>
  <path d="M408.6 547.2a4.2 4.2 0 0 0 7.2 2.2" fill="none" stroke="#e31587" stroke-width="1.3"/>
  <!-- folder -->
  <path d="M487.3 539.5l4.5 1.2v13.4l-4.5-1.2z" fill="#f3d580"/>
  <path d="M491.8 540.7h6v13.4h-6z" fill="#e8b94a"/>
  <path d="M487.3 539.5l4.5 1.2h6" fill="none" stroke="#f8e2a0" stroke-width="0.6"/>
  <!-- word -->
  <rect x="570" y="538" width="15.2" height="17" rx="1" fill="#185abd"/>
  <path d="M570 538h15.2v4.2h-15.2z" fill="#41a5ee"/>
  <path d="M570 542.2h15.2v4.2h-15.2z" fill="#2b7cd3"/>
  <path d="M570 550.8h15.2v4.2h-15.2z" fill="#103f91"/>
  <rect x="566.3" y="542" width="9.5" height="9.5" rx="0.8" fill="#185abd"/>
  <path d="M567.6 544.2l1.3 5.2 1.3-4 1.3 4 1.3-5.2" fill="none" stroke="#fff" stroke-width="0.9"/>
  <!-- mail -->
  <path d="M601 544.3l9.7-5.5 9.6 5.5v8.9h-19.3z" fill="#fff"/>
  <path d="M602.5 545.2l8.2 4.4 8.2-4.4l-4.5 7.2z" fill="#141414"/>
  <path d="M602.5 545.2l8.2 4.4 8.2-4.4" fill="none" stroke="#141414" stroke-width="0.8"/>
  <!-- pdf icon -->
  <path d="M637.6 538.4h9l3.6 3.6v12.6h-12.6z" fill="#fff" stroke="#e2342b" stroke-width="1.1"/>
  <path d="M640 549c1.7-1.1 2.8-3.3 3.1-6 .3 2.4 1.5 4.1 3.3 4.6-2-.1-4.3.4-6.4 1.4z" fill="none" stroke="#e2342b" stroke-width="1"/>
  <path d="M641 552.3h5.6" stroke="#777" stroke-width="1"/>
  <!-- help -->
  <circle cx="726.6" cy="546.8" r="8.2" fill="#fff"/>
  <circle cx="726.6" cy="546.8" r="7" fill="#1a8ad4"/>
  <text x="726.4" y="551.2" font-family="Liberation Sans" font-size="12.5" font-weight="bold" text-anchor="middle" fill="#fff">?</text>
  <circle cx="732.2" cy="552.5" r="3.3" fill="#1a8ad4" stroke="#1b1b1b" stroke-width="0.8"/>
  <path d="M732.2 551.5v2.6M732.2 550.2v.4" stroke="#fff" stroke-width="0.9"/>
  <!-- people -->
  <circle cx="761" cy="541.6" r="2.1" fill="none" stroke="#ddd" stroke-width="1"/>
  <path d="M757.6 548.2a3.4 3.4 0 0 1 6.8 0" fill="none" stroke="#ddd" stroke-width="1"/>
  <circle cx="755.8" cy="545.6" r="2.1" fill="none" stroke="#ddd" stroke-width="1"/>
  <path d="M752.4 552.3a3.4 3.4 0 0 1 6.8 0" fill="none" stroke="#ddd" stroke-width="1"/>
  <!-- chevron up -->
  <path d="M781.3 548.4l5.3-4.8 5.3 4.8" fill="none" stroke="#ddd" stroke-width="1"/>
  <!-- onedrive cloud -->
  <path d="M800.5 551.1h10.5a2.6 2.6 0 0 0 .3-5.2 3.6 3.6 0 0 0 -6.6-1.4 3 3 0 0 0 -4.2 2.7 2 2 0 0 0 0 3.9z" fill="#e8e8e8"/>
  <!-- battery/net -->
  <rect x="818.4" y="543.6" width="11.4" height="6.4" fill="none" stroke="#ddd" stroke-width="0.9"/>
  <rect x="819.2" y="544.4" width="5" height="4.8" fill="#eee"/>
  <circle cx="827.4" cy="548.9" r="3.3" fill="#10a020"/>
  <path d="M826.2 548.9a1.2 1.2 0 1 0 2.4 0" fill="none" stroke="#fff" stroke-width="0.6"/>
  <!-- wifi -->
  <path d="M838.6 551.4a9.2 9.2 0 0 1 9.2-9.2M840.8 551.4a7 7 0 0 1 7-7M843 551.4a4.8 4.8 0 0 1 4.8-4.8" fill="none" stroke="#ccc" stroke-width="0.9"/>
  <rect x="846.6" y="550.2" width="1.6" height="1.6" fill="#eee"/>
  <!-- speaker muted -->
  <path d="M855.5 545.3h2.5l3.6-3v9l-3.6-3h-2.5z" fill="none" stroke="#ddd" stroke-width="0.9"/>
  <path d="M863.2 544.6l3.2 3.2M866.4 544.6l-3.2 3.2" stroke="#ddd" stroke-width="0.9"/>
  <!-- notification -->
  <path d="M967.5 540h12.6v9.4h-6.6l-3.2 2.6v-2.6h-2.8z" fill="#fff"/>
  <path d="M970 542.5h7.6M970 544.4h7.6M970 546.3h7.6" stroke="#bbb" stroke-width="0.7"/>
  <circle cx="980.2" cy="552" r="5.6" fill="#1b1b1b" stroke="#666" stroke-width="0.9"/>
  <text x="980.2" y="555.3" font-family="Liberation Sans" font-size="9" text-anchor="middle" fill="#fff">3</text>
  <path d="M996.4 531v31" stroke="#555" stroke-width="0.8"/>
</svg>
<div class="a" style="left:69.3px;top:8.6px;font-size:11.8px;color:#444">Taper ici pour rechercher</div>
<div class="a" style="left:424px;top:10.2px;font-size:9.3px;color:#fff">QCM Mo...</div>
<div class="a" style="left:505px;top:10.2px;font-size:9px;letter-spacing:-0.2px;color:#fff">UE3bis</div>
<div class="a" style="left:655px;top:10.2px;font-size:9.4px;color:#fff">pH.pdf - ...</div>
<div class="a" style="left:876.8px;top:10.6px;font-size:9.2px;letter-spacing:-0.5px;color:#fff">FRA</div>
<div class="a" style="left:917.6px;top:3.4px;font-size:9.2px;color:#fff">18:27</div>
<div class="a" style="left:903.8px;top:18px;font-size:9.5px;letter-spacing:0.15px;color:#fff">08/02/2020</div>

</div>
</body></html>
